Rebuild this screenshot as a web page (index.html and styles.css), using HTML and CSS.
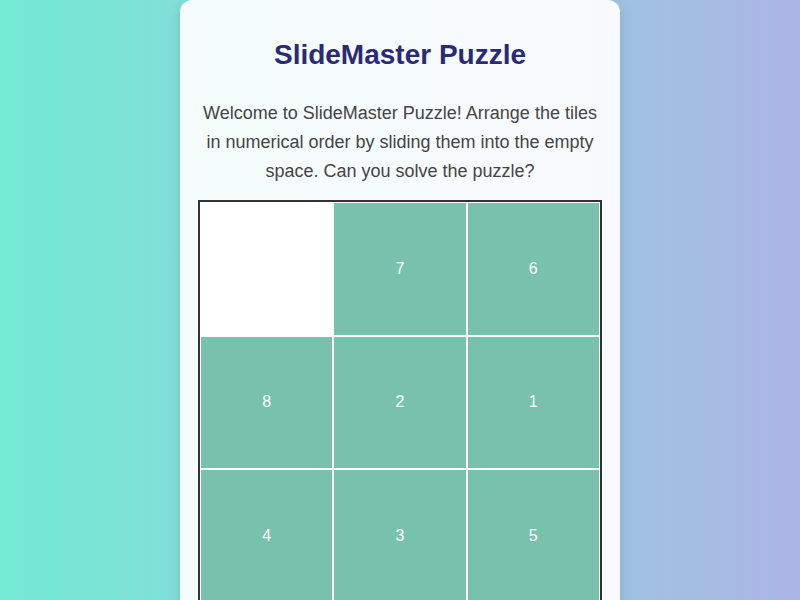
FILE: index.html
```html
<!DOCTYPE html>
<html lang="en">
<head>
<meta charset="utf-8">
<title>SlideMaster Puzzle</title>
<link rel="stylesheet" href="styles.css">
</head>
<body>
<div class="card">
  <h1 class="title">SlideMaster Puzzle</h1>
  <p class="intro">Welcome to SlideMaster Puzzle! Arrange the tiles in numerical order by sliding them into the empty space. Can you solve the puzzle?</p>
  <div class="board">
    <div class="tile empty"></div>
    <div class="tile">7</div>
    <div class="tile">6</div>
    <div class="tile">8</div>
    <div class="tile">2</div>
    <div class="tile">1</div>
    <div class="tile">4</div>
    <div class="tile">3</div>
    <div class="tile">5</div>
  </div>
</div>
</body>
</html>
```
FILE: styles.css
```css
html, body {
  margin: 0;
  padding: 0;
}
body {
  font-family: "Liberation Sans", Arial, sans-serif;
  background: linear-gradient(to right, #74ebd5, #acb6e5);
  min-height: 100vh;
  display: flex;
  justify-content: center;
  align-items: flex-start;
  overflow: hidden;
}
.card {
  width: 404px;
  padding: 20px 18px;
  background: rgba(255, 255, 255, 0.92);
  border-radius: 12px;
  box-shadow: 0 4px 14px rgba(0, 0, 0, 0.12);
  text-align: center;
}
.title {
  font-size: 28px;
  color: #2b2a76;
  margin: 19px 0 28px;
}
.intro {
  font-size: 18px;
  line-height: 28.8px;
  color: #444;
  margin: 0 0 15px;
}
.board {
  display: grid;
  grid-template-columns: repeat(3, 1fr);
  grid-auto-rows: 133.33px;
  width: 400px;
  border: 2px solid #333;
}
.tile {
  box-sizing: border-box;
  border: 1px solid #fff;
  background: #78c2ad;
  color: #fff;
  font-size: 16px;
  display: flex;
  align-items: center;
  justify-content: center;
}
.tile.empty {
  background: #fff;
}
```
